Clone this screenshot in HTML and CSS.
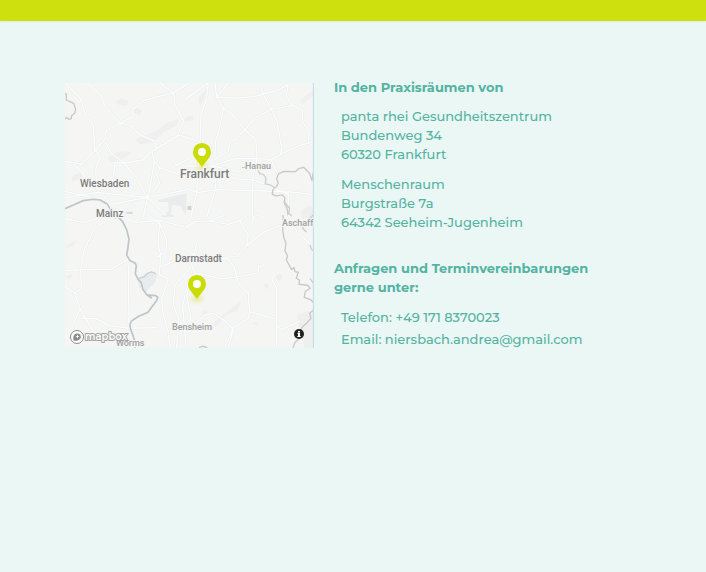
FILE: index.html
```html
<!DOCTYPE html>
<html lang="de">
<head>
<meta charset="utf-8">
<meta name="viewport" content="width=device-width, initial-scale=1">
<title>Kontakt</title>
<link rel="stylesheet" href="styles.css">
</head>
<body>
<header class="topbar"></header>
<main class="contact">
  <div class="map">
    <svg class="map-canvas" viewBox="0 0 249 265">
      <defs>
        <filter id="soft" x="-50%" y="-100%" width="200%" height="300%"><feGaussianBlur stdDeviation="2"/></filter>
        <g id="pin">
          <ellipse cx="0" cy="0" rx="6" ry="3" fill="#cddf10" opacity=".4" filter="url(#soft)"/>
          <path d="M0 0C-3-5-9-9-9-15A9 9 0 0 1 9-15C9-9 3-5 0 0Z" fill="#c9dd03"/>
          <circle cx="0" cy="-15" r="4" fill="#fff"/>
        </g>
        <path id="roads-nw" d="M15 14L60 60 78 115 100 140 104 212 120 240 107 275 112 330M80 14L122 50 135 85 180 136 140 156 134 185 106 216M135 190L155 228 190 252 230 300 262 358 250 418M180 136L210 142 240 170 285 190 290 212 355 172 390 178M180 136L218 116 220 92 250 68 340 44 300 14M340 44L390 14M340 44L345 80 372 130 350 175M15 250L65 258 106 216M40 258L90 310 120 338M290 212L272 222 250 246 190 255 165 254 158 312 110 336M276 222L283 250 300 270 390 302M283 250L270 330 262 358M333 235L350 263 390 240M15 360L110 343 262 358 390 334M15 340L90 358 150 380 262 358 318 412M130 352L160 400 175 418M300 270L290 290 299 315 280 342"/>
        <path id="roads-ne" d="M70 14L65 62 48 110 46 185 38 290 35 345 18 418M0 65L70 14M90 14L95 57 115 90 105 145 92 190 90 238M95 57L132 14M95 57L155 60 210 56 235 48 225 22M235 48L275 38 310 20 304 54 322 82 258 94 210 120 179 157 150 186 135 190 130 220 85 248M235 48L260 95 276 130 290 210 286 232M115 90L150 116 179 155 213 185 216 245 205 290 202 340 202 418M322 82L352 95 353 132 373 162 370 195M385 192L340 204 290 228 260 244 210 242 150 242 80 264M0 178L45 190M0 264L80 264 160 280 210 270 258 244 278 288M0 330L38 344 95 335 202 338 315 342 385 350M90 280L92 332 65 418M100 285L150 302 205 306 240 318M260 330L310 348 310 418"/>
        <path id="roads-sw" d="M142 0L135 20 102 40 92 65 72 105 62 165 64 220 45 235M15 168L64 164 155 163 205 132M15 215L45 235 60 282 38 330M205 150L206 225 207 330 230 398M64 310L110 312 150 332 210 340 290 338M60 282L100 350 160 378 210 398M175 0L230 22 300 16 390 40M300 16L294 85 302 120 298 180 326 192 305 250 310 300 325 352 330 398M265 0L300 28 320 75 318 110 294 125M302 155L345 138 390 140M390 160L345 210 340 270 356 310 350 398M390 185L368 270 378 398M15 12L75 22 142 0"/>
        <path id="roads-se" d="M0 38L30 20 75 18 122 0M75 18L130 28 165 16 190 0M165 16L172 35 190 60 185 92 155 125 90 128 40 130 0 100M185 92L240 50 290 30M105 130L130 133 148 155 155 186 192 180 220 174 220 155 240 148M155 186L160 206 190 235 194 290 220 298 270 312M35 85L20 150 30 175 60 180 110 192 155 186M30 175L5 240 18 310 0 330M60 300L85 295 120 318 145 345 130 398M194 290L190 310 145 338 120 398M30 325L60 300M273 175L260 190 275 220 275 398M345 318L290 345 275 330M310 0L340 58 370 80 385 120M220 0L205 5 202 22"/>
      </defs>
      <rect width="249" height="265" fill="#f5f5f4"/>
      <path class="urban" d="M93 117L122 110 121 131 118 128 116 123 107 122 106 131 111 134 96 134 104 128 103 119 94 119Z"/>

      <!-- north-west -->
      <g transform="translate(-5 -5) scale(.33333)">
        <path class="hill" d="M165 73l18-12 22 8-4 15-24-4zM225 89l20 7-5 15-22-8zM240 178l50-18 30-25 38-13-10 22-38 18-28 30-38 8-20-14zM140 240l40-20 34 2-16 16-42 14zM40 290l28-6-4 18-30 8z"/>
        <use class="casing" href="#roads-nw"/>
        <use class="road" href="#roads-nw"/>
        <path class="border" d="M15 46l4 3v17l22 10 6 18-3 12-10 8v8l-8 2-5-6-6 5"/>
        <path class="river" d="M15 392L45 379 70 368 100 364 120 366 142 378 150 392 155 408 168 421"/>
        <path class="stream" d="M200 405h18"/>
      </g>

      <!-- north-east -->
      <g transform="translate(120 -5) scale(.33333)">
        <path class="hill" d="M40 60l26-30 4 10-25 45zM0 118l25-6v14l-25 6zM347 65l38-30v20l-34 24zM348 400l20-18 17 4v34h-34z"/>
        <use class="casing" href="#roads-ne"/>
        <use class="road" href="#roads-ne"/>
        <path class="border" d="M385 284l-4 24-7-22-18-18-15 4-10 9-34-1-17 8-5 15 5 13-6 10-10 9-2 14 12 5 18-3 8 8-2 17 8 14 4 24"/>
        <path class="stream" d="M220 278l4 9 12 3 7 10-2 18 15 3 16 9M296 370l18 20-3 15 10 10"/>
        <rect x="8" y="384" width="11" height="12" fill="#cbd1d3"/>
      </g>

      <!-- south-west -->
      <g transform="translate(-5 132) scale(.33333)">
        <path class="hill" d="M20 90l30-12-8 14-28 8zM70 88l20-9-4 12zM15 185l25-7-10 15z"/>
        <path class="urban" d="M235 190l28-18 30 5-8 25-30 32-18-20z"/>
        <use class="casing" href="#roads-sw"/>
        <use class="road" href="#roads-sw"/>
        <path class="river" d="M168 0L188 20 200 44 207 72 203 104 200 120 210 137 226 145 229 153 226 176 234 193 244 204 249 224 261 240 287 242 294 247 289 258 275 277 264 292 236 304 215 318 210 328 211 340 220 365 226 384 225 398M258 238l18 12"/>
        <path class="stream" d="M234 191l18-5 10-10 12-5 14 5"/>
      </g>

      <!-- south-east -->
      <g transform="translate(120 132) scale(.33333)">
        <path class="hill" d="M50 292l15-6 2 8-14 6zM90 320l25-20 55-43-12 30-40 16-15 25-20 8zM235 210l16-5-5 20zM272 184l14-8 8 14-14 8zM200 325l18-5-4 12zM335 300l36-12 14 6v106h-25l-15-50z"/>
        <use class="casing" href="#roads-se"/>
        <use class="road" href="#roads-se"/>
        <path class="border" d="M294 0l2 24-3 20 4 25 6 16-3 22 8 16-4 12 8 14 8 15 8-6 2 12 10 2-6 18 10 6-2 12 26 3 8 9-15 10-3 17 20 8 12 12-4 18-12 10 4 15-14 16-12 10-5 18M350 365l-20 18-6 16M42 398l12-4 13 4"/>
        <path class="stream" d="M385 0l-28 28-4 12 12 12M375 90l5 14 5 2M375 190l10 14"/>
      </g>
      <path d="M248.500 0V265" stroke="#bfdcf0"/>

      <use href="#pin" x="137" y="84"/>
      <use href="#pin" x="132" y="216"/>
      <g class="place">
        <text class="city" x="115" y="95">Frankfurt</text>
        <text class="town" x="15" y="104">Wiesbaden</text>
        <text class="town" x="31" y="134">Mainz</text>
        <text class="town" x="110" y="179">Darmstadt</text>
        <text class="village" x="180" y="86">Hanau</text>
        <text class="village" x="217" y="143">Aschaff</text>
        <text class="village" x="107" y="247">Bensheim</text>
        <text class="village" x="51" y="263">Worms</text>
      </g>
      <path d="M177 84.500h4" stroke="#c7cccd"/>
    </svg>
    <a class="map-brand" href="#mapbox" aria-label="mapbox">
      <svg width="64" height="16" viewBox="0 0 64 16">
        <circle cx="8" cy="8" r="6.500" fill="#fff" stroke="#8c8c8c"/>
        <path d="M4.500 11.500C3.500 6 6 4.500 8.500 4.500a3.300 3.300 0 0 1 2 6C9 12 6 12 4.500 11.500Z" fill="#8c8c8c"/>
        <path d="M8.500 5.500l.6 1.400 1.400.6-1.400.6-.6 1.400-.6-1.400-1.400-.6 1.400-.6Z" fill="#fff"/>
        <text class="brand-name" x="16" y="11">mapbox</text>
      </svg>
    </a>
    <button class="map-info" type="button" aria-label="Info">
      <svg width="10" height="10" viewBox="0 0 10 10">
        <circle cx="5" cy="5" r="5" fill="#222"/>
        <path d="M4 2h2v1.500H4zM3.500 4H6v3h.7v1H3.300V7H4V5h-.5z" fill="#fff"/>
      </svg>
    </button>
  </div>
  <div class="details">
    <h2>In den Praxisräumen von</h2>
    <address>panta rhei Gesundheitszentrum<br>Bundenweg 34<br>60320 Frankfurt</address>
    <address>Menschenraum<br>Burgstraße 7a<br>64342 Seeheim-Jugenheim</address>
    <h2 class="inquiries">Anfragen und Terminvereinbarungen gerne unter:</h2>
    <p>Telefon: <a href="tel:+491718370023">+49 171 8370023</a></p>
    <p>Email: <a href="mailto:niersbach.andrea@gmail.com">niersbach.andrea@gmail.com</a></p>
  </div>
</main>
</body>
</html>
```
FILE: styles.css
```css
* {
  box-sizing: border-box;
}

body {
  margin: 0;
  min-height: 100vh;
  background: #eaf7f5;
  color: #54b3a1;
  font: 500 13px/19px Montserrat, Inter, sans-serif;
}

.topbar {
  height: 21px;
  background: #cee00e;
  box-shadow: 0 1px 2px rgba(0, 0, 0, 0.06);
}

.contact {
  display: grid;
  grid-template-columns: 13fr 14fr;
  gap: 20px;
  align-items: start;
  max-width: 720px;
  margin: 0 auto;
  padding: 57px 104px 32px 65px;
}

.map {
  position: relative;
  margin-top: 5px;
  overflow: hidden;
}

.map-canvas {
  display: block;
  width: 100%;
  height: auto;
}

.casing,
.road {
  fill: none;
  stroke: #e8eded;
  stroke-width: 7;
  stroke-linejoin: round;
}

.road {
  stroke: #fcfdfd;
  stroke-width: 4;
}

.hill {
  fill: #eeefee;
}

.urban {
  fill: #e9eced;
}

.river,
.stream {
  fill: none;
  stroke: #bcc5c7;
  stroke-width: 5;
  stroke-linejoin: round;
}

.stream {
  stroke: #c8d0d2;
  stroke-width: 4;
}

.border {
  fill: none;
  stroke: #c9c9c9;
  stroke-width: 4;
  stroke-linejoin: round;
}

.place {
  font-family: Roboto, sans-serif;
  paint-order: stroke;
  stroke: #f5f5f4;
  stroke-width: 2px;
}

.city {
  fill: #7c7c7c;
  font-size: 12px;
  font-weight: 500;
}

.town {
  fill: #7c7c7c;
  font-size: 10px;
  font-weight: 500;
}

.village {
  fill: #a0a0a0;
  font-size: 9px;
}

.map-brand {
  position: absolute;
  left: 4px;
  bottom: 3px;
  line-height: 0;
}

.brand-name {
  fill: #fff;
  stroke: #a4a4a4;
  stroke-width: 2px;
  paint-order: stroke;
  font: 600 10px Montserrat, Inter, sans-serif;
}

.map-info {
  position: absolute;
  right: 10px;
  bottom: 9px;
  padding: 0;
  border: 0;
  background: none;
  line-height: 0;
  cursor: pointer;
}

h2 {
  margin: 0 0 10px;
  font-size: 13px;
  font-weight: 700;
}

.inquiries {
  margin: 27px 0 11px;
}

address {
  margin: 0 0 11px 7px;
  font-style: normal;
}

p {
  margin: 0 0 3px 7px;
}

a {
  color: inherit;
  text-decoration: none;
}
```
